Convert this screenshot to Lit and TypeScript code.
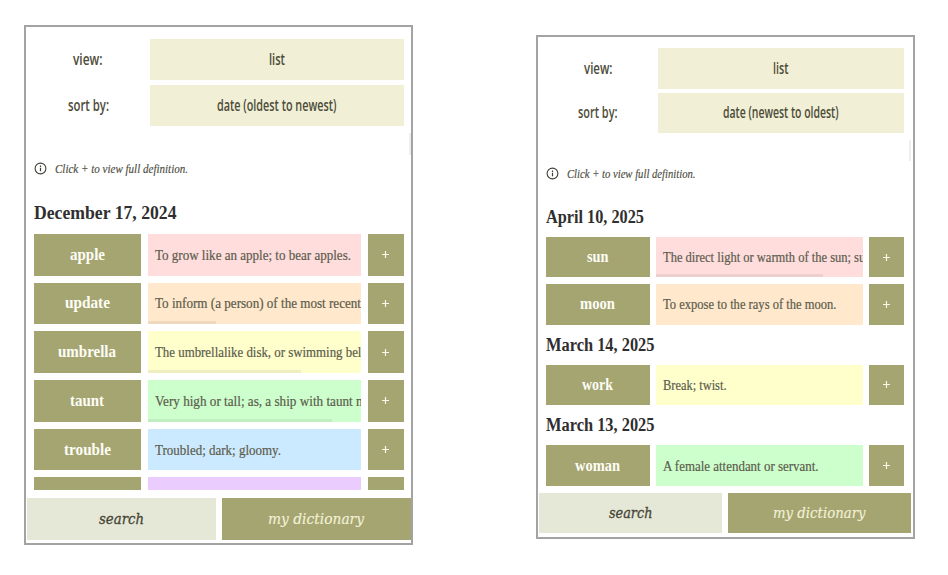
import { LitElement, html, svg, css, nothing } from "lit";
import { customElement, property } from "lit/decorators.js";
import { classMap } from "lit/directives/class-map.js";

interface Entry { word: string; ww: number; def: string; dw: number; tint: string; bar?: number; }
interface Group { date: string; width: number; entries: Entry[]; }
interface Panel {
  id: string; view: number; sortLabel: number; list: number;
  sort: string; sortWidth: number; hint: number; search: number; mine: number; groups: Group[];
}

const panels: Panel[] = [
  {
    id: "oldest", view: 29.5, sortLabel: 41, list: 16, sort: "date (oldest to newest)", sortWidth: 119.5,
    hint: 133, search: 45, mine: 96,
    groups: [{
      date: "December 17, 2024", width: 142.5, entries: [
        { word: "apple", ww: 35, def: "To grow like an apple; to bear apples.", dw: 196, tint: "pink" },
        { word: "update", ww: 45, def: "To inform (a person) of the most recent", dw: 206, tint: "orange", bar: 68 },
        { word: "umbrella", ww: 58, def: "The umbrellalike disk, or swimming bell", dw: 210, tint: "yellow", bar: 153.5 },
        { word: "taunt", ww: 34, def: "Very high or tall; as, a ship with taunt masts", dw: 231, tint: "green", bar: 184 },
        { word: "trouble", ww: 47, def: "Troubled; dark; gloomy.", dw: 126, tint: "blue" },
        { word: "", ww: 0, def: "", dw: 0, tint: "purple" },
      ],
    }],
  },
  {
    id: "newest", view: 28.5, sortLabel: 39.5, list: 15.5, sort: "date (newest to oldest)", sortWidth: 115.5,
    hint: 128.5, search: 43.5, mine: 92.5,
    groups: [
      {
        date: "April 10, 2025", width: 98, entries: [
          { word: "sun", ww: 21.5, def: "The direct light or warmth of the sun; sun", dw: 208.5, tint: "pink", bar: 167 },
          { word: "moon", ww: 35, def: "To expose to the rays of the moon.", dw: 173.5, tint: "orange" },
        ],
      },
      { date: "March 14, 2025", width: 108.5, entries: [{ word: "work", ww: 31, def: "Break; twist.", dw: 63.5, tint: "yellow" }] },
      { date: "March 13, 2025", width: 108.5, entries: [{ word: "woman", ww: 45, def: "A female attendant or servant.", dw: 155.5, tint: "green" }] },
    ],
  },
];

/* One line of type set to a fixed measure; baseline sits 5px under the middle. */
const line = (text: string, width: number, kind: string) => text
  ? html`<svg class="line ${kind}" width=${width} height="20">${svg`<text x="0" y="15" textLength=${width} lengthAdjust="spacingAndGlyphs">${text}</text>`}</svg>`
  : nothing;

@customElement("dictionary-panel")
export class DictionaryPanel extends LitElement {
  @property({ attribute: false }) panel!: Panel;

  static styles = css`
    :host { display: block; height: 100%; }
    * { box-sizing: border-box; }
    .panel { position: relative; display: flex; flex-direction: column; height: 100%; border: 2px solid #a3a3a3; background: #fff; overflow: hidden; }
    .line { display: block; flex: none; overflow: visible; }
    .control { font: 600 16.5px "Open Sans", "Noto Sans", sans-serif; fill: #4c4c39; }
    .hint { font: italic 13px "Liberation Serif", serif; fill: #4c4c40; stroke: #4c4c40; stroke-width: 0.15px; }
    .date { font: bold 18px "Liberation Serif", serif; fill: #2f2f2f; }
    .word { font: bold 16.5px "Liberation Serif", serif; fill: #fdfdf6; }
    .def { font: 14.3px "Liberation Serif", serif; fill: #5c5c4d; stroke: #5c5c4d; stroke-width: 0.2px; }
    .search { font: italic 15px "DejaVu Serif", serif; fill: #454535; stroke: #454535; stroke-width: 0.3px; }
    .mine { font: italic 15px "DejaVu Serif", serif; fill: #f3f2d8; stroke: #f3f2d8; stroke-width: 0.15px; }

    .controls { display: grid; flex: none; align-items: stretch; }
    .label, .option { display: flex; align-items: center; justify-content: center; }
    .option { background: #f1f0d7; }
    .note { display: flex; align-items: center; flex: none; height: 20px; }
    .info { display: block; flex: none; }
    .list { flex: 1; min-height: 0; overflow: hidden; }
    .heading { display: flex; }
    .rows { display: grid; }
    .row { display: grid; height: 100%; }
    .name, .more { display: flex; align-items: center; justify-content: center; background: #a5a571; }
    .more svg { display: block; }
    .text { position: relative; display: flex; align-items: center; overflow: hidden; padding-left: 7px; }
    .bar { position: absolute; left: 0; bottom: 0; height: 3px; background: rgba(90, 90, 90, 0.1); }
    .pink { background: #ffdddd; } .orange { background: #ffe8cb; } .yellow { background: #ffffcc; }
    .green { background: #ccffcc; } .blue { background: #cceaff; } .purple { background: #eaccff; }
    .tabs { display: grid; flex: none; grid-template-columns: 1fr 1fr; }
    .tab { display: flex; align-items: center; justify-content: center; }
    .tab-search { background: #e5e7d7; } .tab-mine { background: #a5a571; }
    .thumb { position: absolute; width: 2px; background: #eeeeee; }

    .oldest .controls { margin: 12px 7px 0 8px; grid-template-columns: 116px 1fr; grid-template-rows: 41px 41px; row-gap: 5px; }
    .oldest .label { padding-right: 8px; }
    .oldest .note { margin: 32px 0 0 8px; gap: 7.5px; }
    .oldest .list { margin: 26px 7px 0 7.5px; }
    .oldest .heading { height: 30px; }
    .oldest .rows { grid-auto-rows: 41.6px; row-gap: 7.1px; }
    .oldest .row { grid-template-columns: 107.5px 213.3px 36px; column-gap: 6.8px; }
    .oldest .tabs { margin: 8px 0 3.5px 1px; height: 41.6px; column-gap: 5.5px; }
    .oldest .thumb { top: 106px; right: 0; height: 22px; }

    .newest .controls { margin: 11px 9px 0 8px; grid-template-columns: 112px 1fr; grid-template-rows: 41px 40px; row-gap: 4px; }
    .newest .label { padding-right: 8px; }
    .newest .note { margin: 30px 0 0 8px; gap: 7.5px; }
    .newest .list { margin: 25px 9px 0 8px; }
    .newest .heading { height: 29px; }
    .newest .group + .group .heading { height: 40.2px; padding-top: 11px; }
    .newest .rows { grid-auto-rows: 40.4px; row-gap: 6.8px; }
    .newest .row { grid-template-columns: 103.8px 206.7px 34.5px; column-gap: 6.5px; }
    .newest .tabs { margin: 7px 2px 4px 1.3px; height: 40.3px; column-gap: 5.5px; }
    .newest .thumb { top: 103px; right: 2px; height: 21px; }
  `;

  private row(e: Entry) {
    return html`<div class="row">
      <div class="name">${line(e.word, e.ww, "word")}</div>
      <div class="text ${e.tint}">
        ${line(e.def, e.dw, "def")}
        ${e.bar ? html`<span class="bar" style="width:${e.bar}px"></span>` : nothing}
      </div>
      <div class="more">${e.word ? html`<svg width="7" height="9" viewBox="0 0 7 9"><path d="M0 4.5H7M3.5 1V8" stroke="#f7f7ea" stroke-width="1.2" fill="none" /></svg>` : nothing}</div>
    </div>`;
  }

  render() {
    const p = this.panel;
    return html`<section class=${classMap({ panel: true, [p.id]: true })}>
      <div class="controls">
        <div class="label">${line("view:", p.view, "control")}</div>
        <div class="option">${line("list", p.list, "control")}</div>
        <div class="label">${line("sort by:", p.sortLabel, "control")}</div>
        <div class="option">${line(p.sort, p.sortWidth, "control")}</div>
      </div>
      <div class="note">
        <svg class="info" width="13" height="13" viewBox="0 0 13 13">
          <circle cx="6.5" cy="6.5" r="5.4" fill="none" stroke="#3f3f32" stroke-width="1.1" />
          <path d="M6.5 5.7V9.2M6.5 3.6V4.9" stroke="#3f3f32" stroke-width="1.2" />
        </svg>
        ${line("Click + to view full definition.", p.hint, "hint")}
      </div>
      <div class="list">
        ${p.groups.map((g) => html`<div class="group">
          <div class="heading">${line(g.date, g.width, "date")}</div>
          <div class="rows">${g.entries.map((e) => this.row(e))}</div>
        </div>`)}
      </div>
      <div class="tabs">
        <div class="tab tab-search">${line("search", p.search, "search")}</div>
        <div class="tab tab-mine">${line("my dictionary", p.mine, "mine")}</div>
      </div>
      <span class="thumb"></span>
    </section>`;
  }
}

@customElement("app-root")
export class AppRoot extends LitElement {
  static styles = css`
    :host { display: block; width: 948px; height: 575px; background: #fff; overflow: hidden; }
    .stage { display: flex; align-items: flex-start; gap: 123px; padding: 25px 0 0 24px; }
    .left { width: 389px; height: 520px; }
    .right { width: 379px; height: 504px; margin-top: 10px; }
  `;
  render() {
    return html`<main class="stage">
      <dictionary-panel class="left" .panel=${panels[0]}></dictionary-panel>
      <dictionary-panel class="right" .panel=${panels[1]}></dictionary-panel>
    </main>`;
  }
}
